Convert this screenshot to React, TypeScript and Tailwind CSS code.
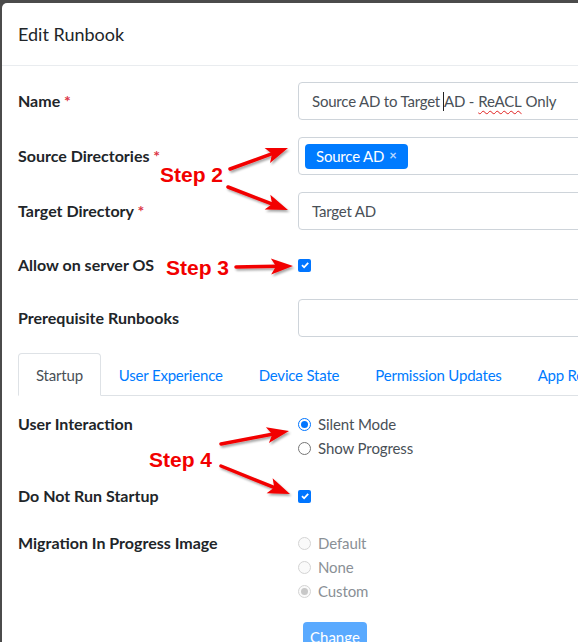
import React from 'react'

const font = { fontFamily: 'Lato, "Noto Sans", sans-serif' }

type Arrow = { x1: number; y1: number; x2: number; y2: number }

// annotation arrows drawn over the form
const arrows: Arrow[] = [
  { x1: 230, y1: 169, x2: 288, y2: 148 },
  { x1: 228, y1: 187, x2: 288, y2: 210 },
  { x1: 236, y1: 267, x2: 293, y2: 266 },
  { x1: 221, y1: 444, x2: 289, y2: 431 },
  { x1: 221, y1: 466, x2: 290, y2: 494 },
]

function arrowHead(a: Arrow) {
  const dx = a.x2 - a.x1
  const dy = a.y2 - a.y1
  const len = Math.sqrt(dx * dx + dy * dy)
  const ux = dx / len
  const uy = dy / len
  const hl = 22
  const hw = 8
  const bx = a.x2 - ux * hl
  const by = a.y2 - uy * hl
  const p1 = `${a.x2},${a.y2}`
  const p2 = `${bx - uy * hw},${by + ux * hw}`
  const p3 = `${bx + ux * 5},${by + uy * 5}`
  const p4 = `${bx + uy * hw},${by - ux * hw}`
  return { pts: `${p1} ${p2} ${p3} ${p4}`, lx: bx + ux * 6, ly: by + uy * 6 }
}

function Annotations() {
  return (
    <svg className="absolute inset-0 pointer-events-none" width={578} height={642}>
      <defs>
        <filter id="sh" x="-20%" y="-50%" width="140%" height="200%">
          <feDropShadow dx="1.5" dy="2" stdDeviation="1.2" floodColor="#000" floodOpacity="0.35" />
        </filter>
      </defs>
      {arrows.map((a, i) => {
        const h = arrowHead(a)
        return (
          <g key={i} filter="url(#sh)">
            <line x1={a.x1} y1={a.y1} x2={h.lx} y2={h.ly} stroke="#f20000" strokeWidth={3.5} strokeLinecap="round" />
            <polygon points={h.pts} fill="#f20000" />
          </g>
        )
      })}
    </svg>
  )
}

function Step({ text, className }: { text: string; className: string }) {
  return (
    <div
      className={`absolute text-[21px] leading-none font-bold text-[#f20000] ${className}`}
      style={{ fontFamily: '"Liberation Sans", Arial, sans-serif' }}
    >
      {text}
    </div>
  )
}

function Label({ children, req }: { children: React.ReactNode; req?: boolean }) {
  return (
    <div className="w-[280px] shrink-0 font-bold text-[16px] text-[#212529]">
      {children}
      {req && <span className="text-[#dc3545]"> *</span>}
    </div>
  )
}

function Checkbox() {
  return (
    <span className="w-[13px] h-[13px] rounded-[2px] bg-[#0075ff] flex items-center justify-center">
      <svg width="10" height="10" viewBox="0 0 10 10">
        <path d="M2 5.2 L4.1 7.3 L8.2 2.8" fill="none" stroke="#fff" strokeWidth="1.8" />
      </svg>
    </span>
  )
}

function Radio({ checked, disabled }: { checked?: boolean; disabled?: boolean }) {
  const ring = disabled ? 'border-[#d4d4d4] bg-[#fafafa]' : checked ? 'border-[#0075ff]' : 'border-[#767676]'
  return (
    <span className={`w-[13px] h-[13px] rounded-full border flex items-center justify-center ${ring}`}>
      {checked && <span className={`w-[7px] h-[7px] rounded-full ${disabled ? 'bg-[#c8c8c8]' : 'bg-[#0075ff]'}`} />}
    </span>
  )
}

function RadioRow({ label, checked, disabled }: { label: string; checked?: boolean; disabled?: boolean }) {
  return (
    <div className="h-[24px] flex items-center gap-[7px] text-[15px] tracking-[-0.1px]">
      <Radio checked={checked} disabled={disabled} />
      <span className={disabled ? 'text-[#8a9096]' : 'text-[#495057]'}>{label}</span>
    </div>
  )
}

const boxCls =
  'w-[320px] h-[38px] border border-[#ced4da] rounded-[4px] flex items-center text-[#495057] text-[15px] tracking-[-0.2px]'

export default function App() {
  const tabs = ['User Experience', 'Device State', 'Permission Updates', 'App Rollback']
  return (
    <div className="relative w-[578px] h-[642px] overflow-hidden bg-[#4b4b4b] pl-[2px] pt-[3px]" style={font}>
      <div className="w-[640px] h-[700px] bg-white rounded-tl-[5px] text-[16px]">
        {/* header */}
        <div className="h-[63px] px-4 flex items-center border-b border-[#e9ecef]">
          <h5 className="text-[18px] text-[#212529] leading-[30px]">Edit Runbook</h5>
        </div>

        {/* body */}
        <div className="px-4 pt-4">
          <div className="flex items-center mb-[17px]">
            <Label req>Name</Label>
            <div className={`${boxCls} px-[13px] border-[#80bdff]`}>
              <span>Source AD to Target</span>
              <span className="inline-block w-px h-[19px] bg-[#222] ml-[3px]" />
              <span>AD - </span>
              <span className="underline decoration-wavy decoration-[#e02020] underline-offset-[3px] decoration-1 ml-[4px]">ReACL</span>
              <span className="ml-[4px]">Only</span>
            </div>
          </div>

          <div className="flex items-center mb-[17px]">
            <Label req>Source Directories</Label>
            <div className={`${boxCls} px-[6px]`}>
              <span className="h-[25px] px-[11px] rounded-[4px] bg-[#007bff] text-white flex items-center gap-[5px]">
                Source AD <span className="text-[13px] font-bold text-[#b8d7ff]">×</span>
              </span>
            </div>
          </div>

          <div className="flex items-center mb-[17px]">
            <Label req>Target Directory</Label>
            <div className={`${boxCls} px-[13px]`}>Target AD</div>
          </div>

          <div className="flex items-center h-[36px] mb-[16px]">
            <Label>Allow on server OS</Label>
            <Checkbox />
          </div>

          <div className="flex items-center mb-[16px]">
            <Label>Prerequisite Runbooks</Label>
            <div className={`${boxCls} px-[13px]`} />
          </div>

          {/* tabs */}
          <div className="flex border-b border-[#dee2e6] text-[15px] tracking-[-0.2px]">
            <div className="px-[17px] pt-[9px] pb-[7px] leading-[24px] border border-[#dee2e6] border-b-white rounded-t-[4px] -mb-px text-[#495057] bg-white">
              Startup
            </div>
            {tabs.map((t) => (
              <div key={t} className="px-[17px] pt-[9px] pb-[7px] leading-[24px] border border-transparent text-[#007bff] whitespace-nowrap">
                {t}
              </div>
            ))}
          </div>

          <div className="pt-4">
            <div className="flex items-start mb-[24px]">
              <div className="h-[24px] flex items-center">
                <Label>User Interaction</Label>
              </div>
              <div>
                <RadioRow label="Silent Mode" checked />
                <RadioRow label="Show Progress" />
              </div>
            </div>

            <div className="flex items-center h-[24px] mb-[23px]">
              <Label>Do Not Run Startup</Label>
              <Checkbox />
            </div>

            <div className="flex items-start mb-[19px]">
              <div className="h-[24px] flex items-center">
                <Label>Migration In Progress Image</Label>
              </div>
              <div>
                <RadioRow label="Default" disabled />
                <RadioRow label="None" disabled />
                <RadioRow label="Custom" checked disabled />
              </div>
            </div>

            <div className="flex">
              <div className="w-[285px] shrink-0" />
              <button className="h-[38px] px-[7px] pb-[8px] rounded-[4px] bg-[#5aaaff] text-white text-[15px] leading-[20px] self-start">
                Change
              </button>
            </div>
          </div>
        </div>
      </div>

      <Annotations />
      <Step text="Step 2" className="left-[160px] top-[164px]" />
      <Step text="Step 3" className="left-[166px] top-[257px]" />
      <Step text="Step 4" className="left-[149px] top-[449px]" />
    </div>
  )
}
